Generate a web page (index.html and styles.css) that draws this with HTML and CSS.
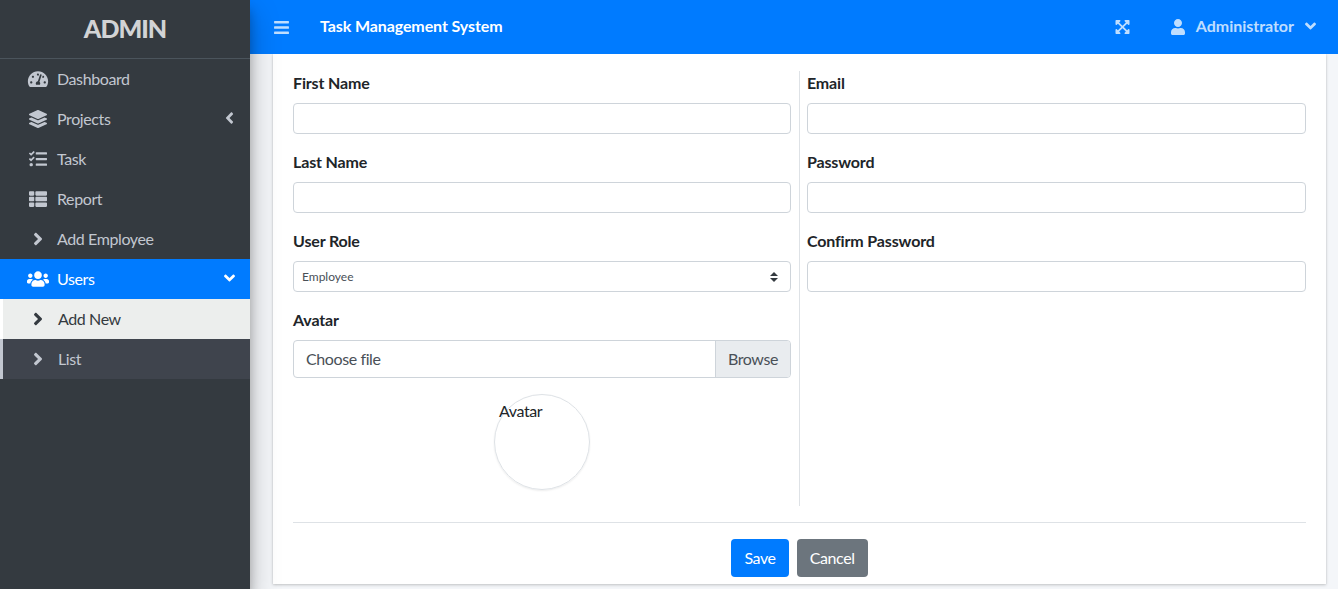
FILE: index.html
```html
<!DOCTYPE html>
<html lang="en">
<head>
  <meta charset="UTF-8">
  <title>Task Management System</title>
  <link rel="stylesheet" href="styles.css">
</head>
<body>
  <aside class="sidebar">
    <div class="brand">ADMIN</div>
    <nav class="nav">
      <a class="nav-link">
        <svg class="nav-icon" viewBox="0 0 576 512"><path d="M288 32C128.94 32 0 160.94 0 320c0 52.8 14.25 102.26 39.06 144.8 5.61 9.62 16.3 15.2 27.44 15.2h443c11.14 0 21.83-5.58 27.44-15.2C561.75 422.26 576 372.8 576 320c0-159.06-128.94-288-288-288zm0 64c14.71 0 26.58 10.13 30.32 23.65-1.11 2.26-2.64 4.23-3.45 6.67l-9.22 27.67c-5.13 3.49-10.97 6.01-17.64 6.01-17.67 0-32-14.33-32-32S270.33 96 288 96zM96 384c-17.67 0-32-14.33-32-32s14.33-32 32-32 32 14.33 32 32-14.33 32-32 32zm48-160c-17.67 0-32-14.33-32-32s14.33-32 32-32 32 14.33 32 32-14.33 32-32 32zm246.77-72.41l-61.33 184C343.13 347.33 352 364.54 352 384c0 11.72-3.38 22.55-8.88 32H232.88c-5.5-9.45-8.88-20.28-8.88-32 0-33.94 26.5-61.43 59.9-63.59l61.34-184.01c4.17-12.56 17.73-19.45 30.36-15.17 12.57 4.19 19.35 17.79 15.17 30.36zm14.66 57.2l15.52-46.55c3.47-1.29 7.13-2.23 11.05-2.23 17.67 0 32 14.33 32 32s-14.33 32-32 32c-11.38-.01-20.89-6.28-26.57-15.22zM480 384c-17.67 0-32-14.33-32-32s14.33-32 32-32 32 14.33 32 32-14.33 32-32 32z"/></svg>
        <span>Dashboard</span>
      </a>
      <a class="nav-link">
        <svg class="nav-icon" viewBox="0 0 512 512"><path d="M12.41 148.02l232.94 105.67c6.8 3.09 14.49 3.09 21.29 0l232.94-105.67c16.55-7.51 16.55-32.52 0-40.03L266.65 2.31a25.607 25.607 0 0 0-21.29 0L12.41 107.98c-16.55 7.51-16.55 32.53 0 40.04zm487.18 88.28l-58.09-26.33-161.64 73.27c-7.56 3.43-15.59 5.17-23.86 5.17s-16.29-1.74-23.86-5.17L70.51 209.97l-58.1 26.33c-16.55 7.5-16.55 32.5 0 40l232.94 105.59c6.8 3.08 14.49 3.08 21.29 0L499.59 276.3c16.55-7.5 16.55-32.5 0-40zm0 127.8l-57.87-26.23-161.86 73.37c-7.56 3.43-15.59 5.17-23.86 5.17s-16.29-1.74-23.86-5.17L70.29 337.87 12.41 364.1c-16.55 7.5-16.55 32.5 0 40l232.94 105.59c6.8 3.08 14.49 3.08 21.29 0L499.59 404.1c16.55-7.5 16.55-32.5 0-40z"/></svg>
        <span>Projects</span>
        <svg class="nav-caret" viewBox="0 0 256 512"><path d="M31.7 239l136-136c9.4-9.4 24.6-9.4 33.9 0l22.6 22.6c9.4 9.4 9.4 24.6 0 33.9L127.9 256l96.4 96.4c9.4 9.4 9.4 24.6 0 33.9L201.7 409c-9.4 9.4-24.6 9.4-33.9 0l-136-136c-9.5-9.4-9.5-24.6-.1-34z"/></svg>
      </a>
      <a class="nav-link">
        <svg class="nav-icon" viewBox="0 0 512 512"><path d="M139.61 35.5a12 12 0 0 0-17 0L58.93 98.81l-22.7-22.12a12 12 0 0 0-17 0L3.53 92.41a12 12 0 0 0 0 17l47.59 47.4a12.78 12.78 0 0 0 17.61 0l15.59-15.62L156.52 69a12.09 12.09 0 0 0 .09-17zm0 159.19a12 12 0 0 0-17 0l-63.68 63.72-22.7-22.1a12 12 0 0 0-17 0L3.53 252a12 12 0 0 0 0 17L51 316.5a12.77 12.77 0 0 0 17.6 0l15.7-15.69 72.2-72.22a12 12 0 0 0 .09-16.9zM64 368c-26.49 0-48.59 21.5-48.59 48S37.53 464 64 464a48 48 0 0 0 0-96zm432 16H208a16 16 0 0 0-16 16v32a16 16 0 0 0 16 16h288a16 16 0 0 0 16-16v-32a16 16 0 0 0-16-16zm0-320H208a16 16 0 0 0-16 16v32a16 16 0 0 0 16 16h288a16 16 0 0 0 16-16V80a16 16 0 0 0-16-16zm0 160H208a16 16 0 0 0-16 16v32a16 16 0 0 0 16 16h288a16 16 0 0 0 16-16v-32a16 16 0 0 0-16-16z"/></svg>
        <span>Task</span>
      </a>
      <a class="nav-link">
        <svg class="nav-icon" viewBox="0 0 512 512"><path d="M149.333 216v80c0 13.255-10.745 24-24 24H24c-13.255 0-24-10.745-24-24v-80c0-13.255 10.745-24 24-24h101.333c13.255 0 24 10.745 24 24zM0 376v80c0 13.255 10.745 24 24 24h101.333c13.255 0 24-10.745 24-24v-80c0-13.255-10.745-24-24-24H24c-13.255 0-24 10.745-24 24zM125.333 32H24C10.745 32 0 42.745 0 56v80c0 13.255 10.745 24 24 24h101.333c13.255 0 24-10.745 24-24V56c0-13.255-10.745-24-24-24zm80 448H488c13.255 0 24-10.745 24-24v-80c0-13.255-10.745-24-24-24H205.333c-13.255 0-24 10.745-24 24v80c0 13.255 10.745 24 24 24zm-24-424v80c0 13.255 10.745 24 24 24H488c13.255 0 24-10.745 24-24V56c0-13.255-10.745-24-24-24H205.333c-13.255 0-24 10.745-24 24zm24 264H488c13.255 0 24-10.745 24-24v-80c0-13.255-10.745-24-24-24H205.333c-13.255 0-24 10.745-24 24v80c0 13.255 10.745 24 24 24z"/></svg>
        <span>Report</span>
      </a>
      <a class="nav-link">
        <svg class="nav-icon nav-icon-small" viewBox="0 0 256 512"><path d="M224.3 273l-136 136c-9.4 9.4-24.6 9.4-33.9 0l-22.6-22.6c-9.4-9.4-9.4-24.6 0-33.9l96.4-96.4-96.4-96.4c-9.4-9.4-9.4-24.6 0-33.9L54.3 103c9.4-9.4 24.6-9.4 33.9 0l136 136c9.5 9.4 9.5 24.6.1 34z"/></svg>
        <span>Add Employee</span>
      </a>
      <a class="nav-link nav-link-active">
        <svg class="nav-icon" viewBox="0 0 640 512"><path d="M96 224c35.3 0 64-28.7 64-64s-28.7-64-64-64-64 28.7-64 64 28.7 64 64 64zm448 0c35.3 0 64-28.7 64-64s-28.7-64-64-64-64 28.7-64 64 28.7 64 64 64zm32 32h-64c-17.6 0-33.5 7.1-45.1 18.6 40.3 22.1 68.9 62 75.1 109.4h66c17.7 0 32-14.3 32-32v-32c0-35.3-28.7-64-64-64zm-256 0c61.9 0 112-50.1 112-112S381.9 32 320 32 208 82.1 208 144s50.1 112 112 112zm76.8 32h-8.3c-20.8 10-43.9 16-68.5 16s-47.6-6-68.5-16h-8.3C179.6 288 128 339.6 128 403.2V432c0 26.5 21.5 48 48 48h288c26.5 0 48-21.5 48-48v-28.8c0-63.6-51.6-115.2-115.2-115.2zm-223.7-13.4C161.5 263.1 145.6 256 128 256H64c-35.3 0-64 28.7-64 64v32c0 17.7 14.3 32 32 32h65.9c6.3-47.4 34.9-87.3 75.2-109.4z"/></svg>
        <span>Users</span>
        <svg class="nav-caret nav-caret-down" viewBox="0 0 320 512"><path d="M143 352.3L7 216.3c-9.4-9.4-9.4-24.6 0-33.9l22.6-22.6c9.4-9.4 24.6-9.4 33.9 0l96.4 96.4 96.4-96.4c9.4-9.4 24.6-9.4 33.9 0l22.6 22.6c9.4 9.4 9.4 24.6 0 33.9l-136 136c-9.2 9.4-24.4 9.4-33.8 0z"/></svg>
      </a>
      <a class="nav-link nav-sub nav-sub-current">
        <svg class="nav-icon nav-icon-small" viewBox="0 0 256 512"><path d="M224.3 273l-136 136c-9.4 9.4-24.6 9.4-33.9 0l-22.6-22.6c-9.4-9.4-9.4-24.6 0-33.9l96.4-96.4-96.4-96.4c-9.4-9.4-9.4-24.6 0-33.9L54.3 103c9.4-9.4 24.6-9.4 33.9 0l136 136c9.5 9.4 9.5 24.6.1 34z"/></svg>
        <span>Add New</span>
      </a>
      <a class="nav-link nav-sub">
        <svg class="nav-icon nav-icon-small" viewBox="0 0 256 512"><path d="M224.3 273l-136 136c-9.4 9.4-24.6 9.4-33.9 0l-22.6-22.6c-9.4-9.4-9.4-24.6 0-33.9l96.4-96.4-96.4-96.4c-9.4-9.4-9.4-24.6 0-33.9L54.3 103c9.4-9.4 24.6-9.4 33.9 0l136 136c9.5 9.4 9.5 24.6.1 34z"/></svg>
        <span>List</span>
      </a>
    </nav>
  </aside>

  <main class="main">
    <header class="topbar">
      <svg class="top-icon bars" viewBox="0 0 448 512"><path d="M16 132h416c8.837 0 16-7.163 16-16V76c0-8.837-7.163-16-16-16H16C7.163 60 0 67.163 0 76v40c0 8.837 7.163 16 16 16zm0 160h416c8.837 0 16-7.163 16-16v-40c0-8.837-7.163-16-16-16H16c-8.837 0-16 7.163-16 16v40c0 8.837 7.163 16 16 16zm0 160h416c8.837 0 16-7.163 16-16v-40c0-8.837-7.163-16-16-16H16c-8.837 0-16 7.163-16 16v40c0 8.837 7.163 16 16 16z"/></svg>
      <div class="app-title">Task Management System</div>
      <svg class="top-icon expand" viewBox="0 0 448 512"><path d="M448 344v112a23.94 23.94 0 0 1-24 24H312c-21.39 0-32.09-25.9-17-41l36.2-36.2L224 295.6 116.77 402.9 153 439c15.09 15.1 4.39 41-17 41H24a23.94 23.94 0 0 1-24-24V344c0-21.4 25.89-32.1 41-17l36.19 36.2L184.46 256 77.18 148.7 41 185c-15.1 15.1-41 4.4-41-17V56a23.94 23.94 0 0 1 24-24h112c21.39 0 32.09 25.9 17 41l-36.2 36.2L224 216.4l107.23-107.3L295 73c-15.09-15.1-4.39-41 17-41h112a23.94 23.94 0 0 1 24 24v112c0 21.4-25.89 32.1-41 17l-36.19-36.2L263.54 256l107.28 107.3L407 327.1c15.1-15.2 41-4.5 41 16.9z"/></svg>
      <svg class="top-icon user" viewBox="0 0 448 512"><path d="M224 256c70.7 0 128-57.3 128-128S294.7 0 224 0 96 57.3 96 128s57.3 128 128 128zm89.6 32h-16.7c-22.2 10.2-46.9 16-72.9 16s-50.6-5.8-72.9-16h-16.7C60.2 288 0 348.2 0 422.4V464c0 26.5 21.5 48 48 48h352c26.5 0 48-21.5 48-48v-41.6c0-74.2-60.2-134.4-134.4-134.4z"/></svg>
      <div class="user-name">Administrator</div>
      <svg class="top-icon user-caret" viewBox="0 0 320 512"><path d="M143 352.3L7 216.3c-9.4-9.4-9.4-24.6 0-33.9l22.6-22.6c9.4-9.4 24.6-9.4 33.9 0l96.4 96.4 96.4-96.4c9.4-9.4 24.6-9.4 33.9 0l22.6 22.6c9.4 9.4 9.4 24.6 0 33.9l-136 136c-9.2 9.4-24.4 9.4-33.8 0z"/></svg>
    </header>

    <div class="content">
      <form class="card">
        <div class="form-cols">
          <div class="col col-left">
            <div class="form-group">
              <label class="label" for="firstname">First Name</label>
              <input class="input" type="text" id="firstname">
            </div>
            <div class="form-group">
              <label class="label" for="lastname">Last Name</label>
              <input class="input" type="text" id="lastname">
            </div>
            <div class="form-group">
              <label class="label" for="role">User Role</label>
              <select class="input select" id="role">
                <option>Employee</option>
              </select>
            </div>
            <div class="form-group">
              <label class="label">Avatar</label>
              <div class="file-box">
                <span class="file-name">Choose file</span>
                <span class="file-btn">Browse</span>
              </div>
            </div>
            <div class="avatar-wrap">
              <div class="avatar">Avatar</div>
            </div>
          </div>
          <div class="col col-right">
            <div class="form-group">
              <label class="label" for="email">Email</label>
              <input class="input" type="email" id="email">
            </div>
            <div class="form-group">
              <label class="label" for="password">Password</label>
              <input class="input" type="password" id="password">
            </div>
            <div class="form-group">
              <label class="label" for="cpass">Confirm Password</label>
              <input class="input" type="password" id="cpass">
            </div>
          </div>
        </div>
        <hr class="divider">
        <div class="actions">
          <button class="btn btn-save" type="button">Save</button>
          <button class="btn btn-cancel" type="button">Cancel</button>
        </div>
      </form>
    </div>
  </main>
</body>
</html>
```

FILE: styles.css
```css
* {
  box-sizing: border-box;
}
html, body {
  height: 100%;
}
body {
  margin: 0;
  display: flex;
  overflow: hidden;
  font-family: Lato, "Noto Sans", sans-serif;
  font-size: 16px;
  line-height: 24px;
  letter-spacing: -.4px;
  color: #212529;
  background-color: #f4f6f9;
}

/* sidebar */
.sidebar {
  width: 250px;
  flex: none;
  background-color: #343a40;
  color: #c2c7d0;
  box-shadow: 0 14px 28px rgba(0,0,0,.25), 0 10px 10px rgba(0,0,0,.22);
  position: relative;
  z-index: 2;
}
.brand {
  height: 59px;
  border-bottom: 1px solid #4b545c;
  text-align: center;
  font-size: 25px;
  font-weight: 900;
  line-height: 57px;
  letter-spacing: -1px;
  color: rgba(255,255,255,.8);
}
.nav-link {
  height: 40px;
  display: flex;
  align-items: center;
  padding-left: 27px;
  padding-right: 14px;
}
.nav-link span {
  flex: 1;
}
.nav-icon {
  width: 22px;
  height: 18px;
  margin-right: 8px;
  fill: currentColor;
}
.nav-icon-small {
  height: 20px;
}
.nav-caret {
  width: 9px;
  height: 18px;
  margin-top: -2px;
  margin-right: 2px;
  fill: currentColor;
}
.nav-caret-down {
  width: 11px;
  margin-right: 1px;
}
.nav-link-active {
  background-color: #007bff;
  color: #fff;
}
.nav-sub {
  border-left: 3px solid #c2c7d0;
  padding-left: 24px;
  background-color: #3f444d;
}
.nav-sub span {
  padding-left: 1px;
}
.nav-sub-current {
  border-left-color: #fff;
  background-color: #eceeed;
  color: #343a40;
}

/* top bar */
.main {
  flex: 1;
  min-width: 0;
  display: flex;
  flex-direction: column;
}
.topbar {
  height: 54px;
  flex: none;
  display: flex;
  align-items: center;
  background-color: #007bff;
  color: #fff;
  font-weight: 700;
  letter-spacing: -.1px;
  position: relative;
  z-index: 1;
}
.top-icon {
  fill: rgba(255,255,255,.75);
}
.bars {
  width: 15px;
  height: 17px;
  margin-left: 24px;
}
.app-title {
  margin-left: 31px;
  margin-top: -2px;
  flex: 1;
}
.expand {
  width: 15px;
  height: 16px;
}
.user {
  width: 14px;
  height: 16px;
  margin-left: 41px;
}
.user-name {
  margin-left: 11px;
  margin-top: -2px;
  letter-spacing: -.02px;
  color: rgba(255,255,255,.75);
}
.user-caret {
  width: 11px;
  height: 18px;
  margin-top: -2px;
  margin-left: 11px;
  margin-right: 22px;
}

/* form card */
.content {
  flex: 1;
  padding: 0 12px 5px 23px;
  min-height: 0;
}
.card {
  height: 100%;
  padding: 17px 20px 0;
  background-color: #fff;
  box-shadow: 0 0 1px rgba(0,0,0,.125), 0 1px 3px rgba(0,0,0,.2);
}
.form-cols {
  display: flex;
}
.col-left {
  width: 507px;
  flex: none;
  padding-right: 8px;
  border-right: 1px solid #dee2e6;
}
.col-right {
  flex: 1;
  padding-left: 7px;
}
.form-group {
  margin-bottom: 16px;
}
.label {
  display: block;
  margin-bottom: 8px;
  font-weight: 700;
  letter-spacing: -.15px;
}
.input {
  display: block;
  width: 100%;
  height: 31px;
  padding: 0 8px;
  border: 1px solid #ced4da;
  border-radius: 4px;
  background-color: #fff;
  font-family: inherit;
  font-size: 12px;
  color: #495057;
  outline: none;
}
.select {
  appearance: none;
  background-image: url("data:image/svg+xml,%3csvg xmlns='http://www.w3.org/2000/svg' width='8' height='10' viewBox='0 0 4 5'%3e%3cpath fill='%23343a40' d='M2 0L0 2h4zm0 5L0 3h4z'/%3e%3c/svg%3e");
  background-repeat: no-repeat;
  background-position: right 12px center;
}
.file-box {
  height: 38px;
  display: flex;
  border: 1px solid #ced4da;
  border-radius: 4px;
  color: #495057;
  line-height: 36px;
}
.file-name {
  flex: 1;
  padding-left: 12px;
}
.file-btn {
  padding: 0 12px;
  background-color: #e9ecef;
  border-left: 1px solid #ced4da;
  border-radius: 0 3px 3px 0;
}
.avatar-wrap {
  display: flex;
  justify-content: center;
  margin-bottom: 16px;
}
.avatar {
  width: 96px;
  height: 96px;
  padding: 4px;
  border: 1px solid #dee2e6;
  border-radius: 50%;
  box-shadow: 0 1px 2px rgba(0,0,0,.075);
}
.divider {
  margin: 16px 0;
  border: 0;
  border-top: 1px solid #dee2e6;
}
.actions {
  display: flex;
  justify-content: center;
  gap: 8px;
}
.btn {
  height: 38px;
  padding: 0 13px 2px;
  border: 0;
  border-radius: 4px;
  font-family: inherit;
  font-size: 16px;
  letter-spacing: -.4px;
  color: #fff;
}
.btn-save {
  background-color: #007bff;
}
.btn-cancel {
  background-color: #6c757d;
}
```
